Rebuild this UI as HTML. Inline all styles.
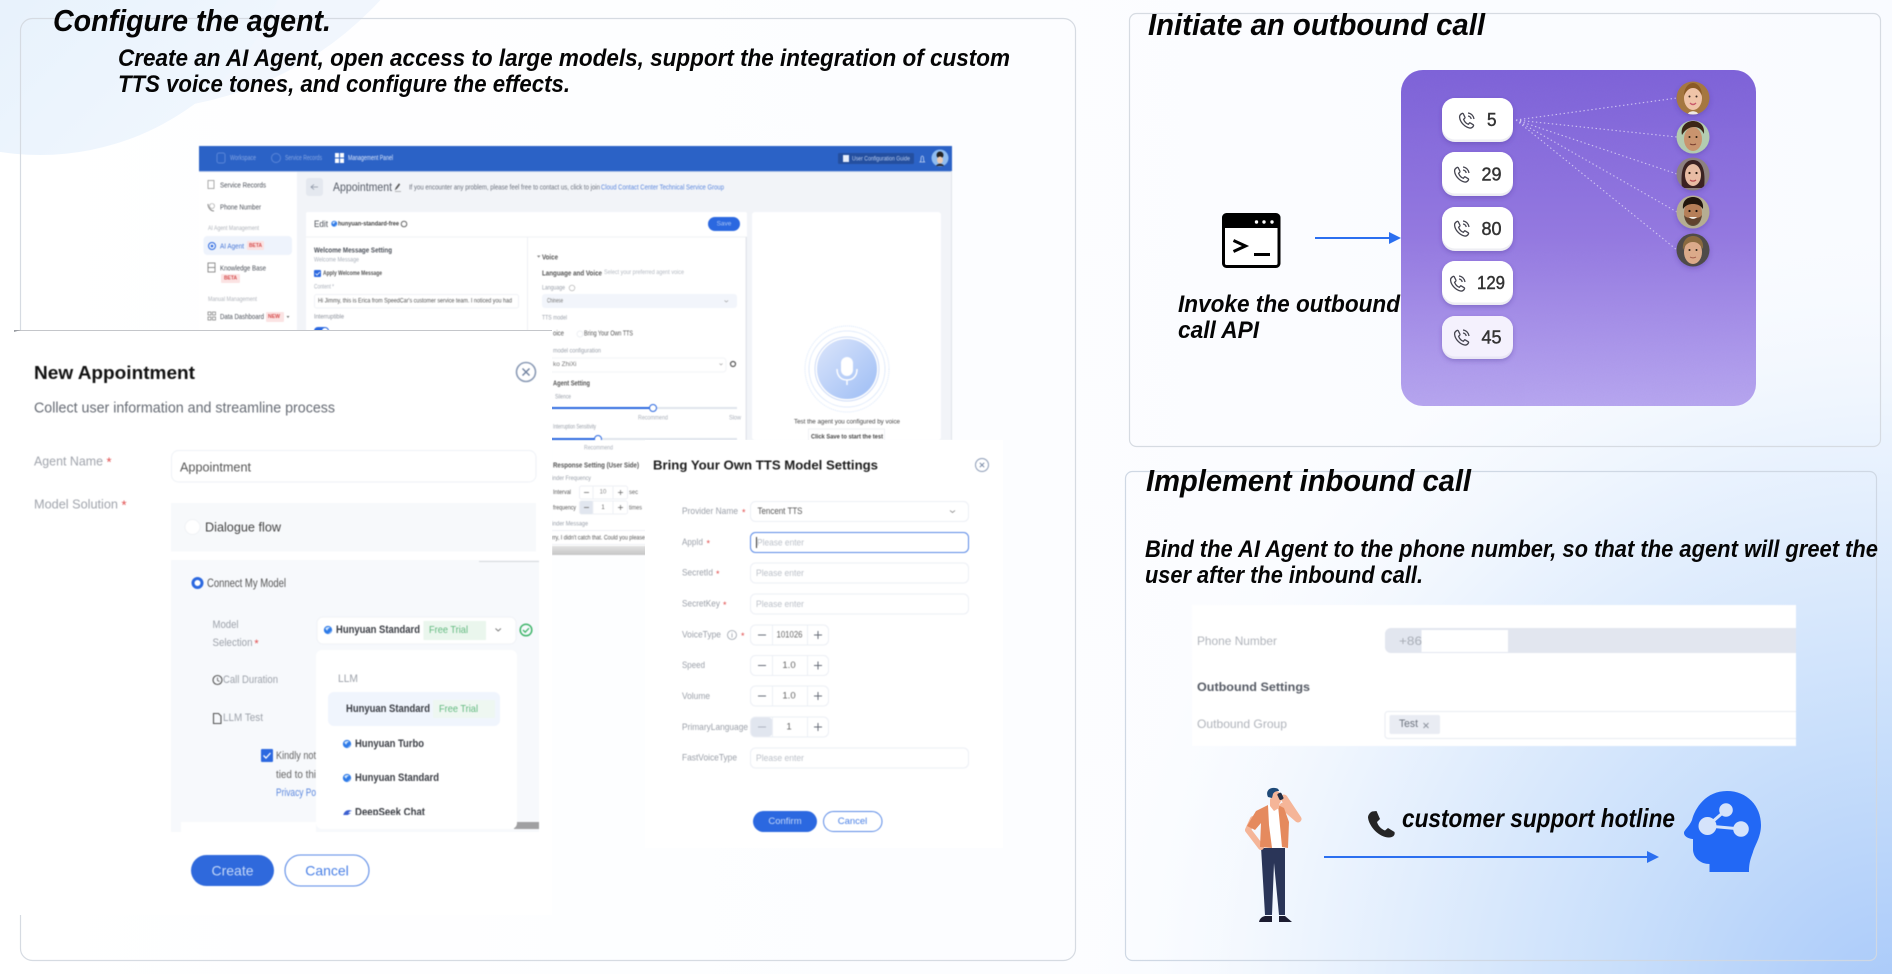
<!DOCTYPE html>
<html lang="en"><head><meta charset="utf-8"><title>AI Agent</title>
<style>
html,body{margin:0;padding:0;width:1892px;height:974px;overflow:hidden;background:#fff}
svg{display:block;position:absolute;left:0;top:0}
text{font-family:"Liberation Sans",sans-serif;white-space:pre}
.h{font-weight:700;font-style:italic;fill:#050505}
.u text,text.c{dominant-baseline:central}
.shot{filter:blur(.4px)}
.soft{filter:blur(.35px)}
</style></head><body>
<svg width="1892" height="974" viewBox="0 0 1892 974" xmlns="http://www.w3.org/2000/svg">
<defs>
<linearGradient id="base" x1="0" y1="0" x2="1" y2="0"><stop offset="0" stop-color="#fff"/><stop offset=".5" stop-color="#fcfdff"/><stop offset="1" stop-color="#f9fbff"/></linearGradient>
<radialGradient id="bg" gradientUnits="userSpaceOnUse" cx="1892" cy="1010" r="800"><stop offset="0" stop-color="#a8c9f9"/><stop offset=".35" stop-color="#c9dffb"/><stop offset=".75" stop-color="#eef5fe"/><stop offset="1" stop-color="#f9fbff" stop-opacity="0"/></radialGradient>
<linearGradient id="blob" x1="0" y1="0" x2="1" y2="1"><stop offset="0" stop-color="#d9eafa"/><stop offset="1" stop-color="#f3f8fe"/></linearGradient>
<linearGradient id="pur" x1="0" y1="0" x2="0" y2="1"><stop offset="0" stop-color="#7d62d8"/><stop offset=".5" stop-color="#9479e0"/><stop offset="1" stop-color="#b8a8f0"/></linearGradient>
<linearGradient id="mic" x1="0" y1="0" x2="1" y2="1"><stop offset="0" stop-color="#dbe5fb"/><stop offset="1" stop-color="#9dbdf5"/></linearGradient>
<linearGradient id="gb" x1="0" y1="0" x2="0" y2="1"><stop offset="0" stop-color="#e2e2e2"/><stop offset="1" stop-color="#c6c6c6"/></linearGradient>
<filter id="noise"><feTurbulence type="fractalNoise" baseFrequency=".9" numOctaves="2"/><feColorMatrix values="0 0 0 0 .3 0 0 0 0 .2 0 0 0 0 .7 0 0 0 .9 0"/></filter>
<filter id="sh" x="-30%" y="-30%" width="160%" height="170%"><feDropShadow dx="0" dy="2" stdDeviation="2.5" flood-color="#4a3596" flood-opacity=".35"/></filter>
<clipPath id="pan"><rect x="1401" y="70" width="355" height="336" rx="22"/></clipPath>
<clipPath id="av"><circle cx="0" cy="0" r="16.5"/></clipPath>
<clipPath id="dd"><rect x="316" y="650" width="201" height="165"/></clipPath>
<symbol id="ph" viewBox="0 0 18 18" overflow="visible"><path d="M4 2.500c-1.500.8-2.600 2-2.400 3.800.5 4.800 5 9.800 10 10.700 1.600.3 3-.6 3.800-2 .3-.5.1-1-.3-1.300l-2.600-1.600c-.4-.3-1-.2-1.300.2l-.9 1c-2-.8-4-3-4.700-5l1-.9c.4-.3.5-.8.3-1.300L5.300 2.800C5 2.300 4.400 2.200 4 2.500z" fill="none" stroke="#454550" stroke-width="1.300"/><path d="M10 2c3 .2 5.500 2.700 6 6M10 5c1.600.2 2.900 1.400 3.200 3" fill="none" stroke="#454550" stroke-width="1.300"/></symbol>
<symbol id="globe" viewBox="0 0 10 10" overflow="visible"><circle cx="5" cy="5" r="4.600" fill="#2f7be8"/><path d="M2 3.200c1.600-1.800 4-2 5.500-.8C6 2.600 4.600 4 4.400 5.600 3.500 5.500 2.600 4.600 2 3.200zM5 9c1.800-.6 3.200-2 3.600-3.600.4 1.800-1.600 3.900-3.600 3.600z" fill="#cfe3fb"/></symbol>
</defs>

<rect width="1892" height="974" fill="url(#base)"/>
<rect width="1892" height="974" fill="url(#bg)"/>
<circle cx="130" cy="-230" r="340" fill="#f1f6fd"/>
<circle cx="40" cy="-105" r="260" fill="url(#blob)"/>

<rect x="20.500" y="18.500" width="1055" height="942" rx="12" fill="none" stroke="#d6dbe2" stroke-width="1.200"/>
<rect x="1129.500" y="13.500" width="751" height="433" rx="7" fill="none" stroke="#d6dbe2" stroke-width="1.200"/>
<rect x="1125.500" y="471.500" width="751" height="489" rx="7" fill="none" stroke="#cfd8e4" stroke-width="1.200"/>

<text class="h" x="53" y="31" font-size="31" textLength="278" lengthAdjust="spacingAndGlyphs">Configure the agent.</text>
<text class="h" x="118" y="66" font-size="24" textLength="892" lengthAdjust="spacingAndGlyphs">Create an AI Agent, open access to large models, support the integration of custom</text>
<text class="h" x="118" y="92" font-size="24" textLength="452" lengthAdjust="spacingAndGlyphs">TTS voice tones, and configure the effects.</text>

<!-- management screenshot -->
<g class="shot u">
<rect x="199" y="146" width="753" height="294" fill="#f2f4f8"/>
<rect x="199" y="171" width="98" height="269" fill="#fff"/>
<rect x="199" y="146" width="753" height="25" fill="#2b62c6"/>
<rect x="217" y="153" width="8" height="10" rx="2" fill="none" stroke="#5a86d8"/>
<text x="230" y="158.500" font-size="7" fill="#86a6e2" textLength="26" lengthAdjust="spacingAndGlyphs">Workspace</text>
<circle cx="276" cy="158" r="4.500" fill="none" stroke="#5a86d8"/>
<text x="285" y="158.500" font-size="7" fill="#86a6e2" textLength="37" lengthAdjust="spacingAndGlyphs">Service Records</text>
<rect x="335" y="153" width="4" height="4.500" fill="#fff"/><rect x="340" y="153" width="4" height="4.500" fill="#fff"/><rect x="335" y="158.500" width="4" height="4.500" fill="#fff"/><rect x="340" y="158.500" width="4" height="4.500" fill="#fff"/>
<text x="348" y="158.500" font-size="7" fill="#dbe6f9" textLength="45" lengthAdjust="spacingAndGlyphs">Management Panel</text>
<rect x="838" y="153" width="76" height="11" rx="1.500" fill="#244f9f"/>
<rect x="843" y="155" width="6" height="7" fill="#e8eefa"/>
<text x="852" y="159" font-size="6.500" fill="#b9cdf0" textLength="58" lengthAdjust="spacingAndGlyphs">User Configuration Guide</text>
<path d="M920 162h4.500c-1-1-1-2-1-4 0-1-.6-2-1.200-2s-1.200 1-1.200 2c0 2 0 3-1.100 4z" fill="none" stroke="#c6d6f4" stroke-width=".8"/>
<circle cx="940" cy="158" r="8.500" fill="#8fbcf0"/><circle cx="940" cy="155" r="3.500" fill="#222"/><ellipse cx="940" cy="160" rx="3" ry="3.500" fill="#e9c9b2"/><path d="M936 166c1-3 7-3 8 0" fill="#2a2a30"/>

<g font-size="7.500" fill="#4a4f58">
<rect x="208" y="180.500" width="6" height="8" fill="none" stroke="#888" stroke-width=".7"/>
<text x="220" y="185" textLength="46" lengthAdjust="spacingAndGlyphs">Service Records</text>
<path d="M208 204c0 4 3 7 6 7" fill="none" stroke="#888" stroke-width="1"/><circle cx="212" cy="206" r="2.500" fill="none" stroke="#999" stroke-width=".6"/>
<text x="220" y="207" textLength="41" lengthAdjust="spacingAndGlyphs">Phone Number</text>
<text x="208" y="229" font-size="6" fill="#b0b4bb" textLength="51" lengthAdjust="spacingAndGlyphs">AI Agent Management</text>
<rect x="203.500" y="236" width="88.500" height="19" rx="4" fill="#eef3fc"/>
<circle cx="212" cy="246" r="3.500" fill="none" stroke="#2b68e0"/><circle cx="212" cy="246" r="1.300" fill="#2b68e0"/>
<text x="220" y="246" fill="#4877d6" textLength="24" lengthAdjust="spacingAndGlyphs">AI Agent</text>
<rect x="247" y="241" width="17" height="9" rx="1" fill="#fbe3e3"/><text x="249" y="246" font-size="5.500" fill="#d64b4b" font-weight="700" textLength="13" lengthAdjust="spacingAndGlyphs">BETA</text>
<rect x="208" y="263" width="7" height="9" fill="none" stroke="#777" stroke-width=".8"/><path d="M208 267.500h7" stroke="#777" stroke-width=".8"/>
<text x="220" y="268" textLength="46" lengthAdjust="spacingAndGlyphs">Knowledge Base</text>
<rect x="221" y="274" width="19" height="9" rx="1" fill="#fbe3e3"/><text x="224" y="278.500" font-size="5.500" fill="#d64b4b" font-weight="700" textLength="13" lengthAdjust="spacingAndGlyphs">BETA</text>
<text x="208" y="300" font-size="6" fill="#b0b4bb" textLength="49" lengthAdjust="spacingAndGlyphs">Manual Management</text>
<rect x="208" y="312" width="3" height="3" fill="none" stroke="#777" stroke-width=".7"/><rect x="212.500" y="312" width="3" height="3" fill="none" stroke="#777" stroke-width=".7"/><rect x="208" y="317" width="3" height="3" fill="none" stroke="#777" stroke-width=".7"/><rect x="212.500" y="317" width="3" height="3" fill="none" stroke="#777" stroke-width=".7"/>
<text x="220" y="316.500" textLength="44" lengthAdjust="spacingAndGlyphs">Data Dashboard</text>
<rect x="266" y="312" width="18" height="10" rx="1" fill="#fbe3e3"/><text x="268" y="317" font-size="5.500" fill="#d64b4b" font-weight="700" textLength="12" lengthAdjust="spacingAndGlyphs">NEW</text>
<path d="M286.500 316l1.500 2 1.500-2z" fill="#777"/>
</g>

<rect x="306" y="178" width="17" height="18" rx="3" fill="#e4e8ef"/>
<path d="M318 187h-7m3-2.500l-3 2.500 3 2.500" fill="none" stroke="#8a93a3" stroke-width=".8"/>
<text x="333" y="187" font-size="12" fill="#555b66" textLength="59" lengthAdjust="spacingAndGlyphs">Appointment</text>
<path d="M395 190l1-2.500 3-4 1 1-3 4zM395 191.500h6" fill="#555" stroke="#555" stroke-width=".4"/>
<text x="409" y="187" font-size="7.500" fill="#6a707c" textLength="191" lengthAdjust="spacingAndGlyphs">If you encounter any problem, please feel free to contact us, click to join</text>
<text x="601" y="187" font-size="7.500" fill="#5b87de" textLength="123" lengthAdjust="spacingAndGlyphs">Cloud Contact Center Technical Service Group</text>

<rect x="306" y="212" width="441" height="228" rx="2" fill="#fff"/>
<rect x="752" y="212" width="189" height="228" rx="3" fill="#fff"/>
<rect x="199" y="171" width="753" height=".8" fill="#9fb7e2"/>
<rect x="951" y="171" width="1" height="269" fill="#dfe3ea"/>
<rect x="306" y="236.500" width="441" height="1" fill="#f0f2f5"/>
<rect x="527" y="237" width="1" height="203" fill="#eef0f4"/>
<rect x="745.500" y="237" width="1.500" height="203" fill="#e4e7ec"/>
<text x="314" y="224" font-size="9" fill="#4a4f58" textLength="14" lengthAdjust="spacingAndGlyphs">Edit</text>
<use href="#globe" x="331" y="220.500" width="6.500" height="6.500"/>
<text x="338" y="224" font-size="6.500" font-weight="700" fill="#444" textLength="61" lengthAdjust="spacingAndGlyphs">hunyuan-standard-free</text>
<circle cx="404" cy="224" r="2.800" fill="none" stroke="#666" stroke-width="1"/>
<rect x="708" y="217" width="32" height="14" rx="7" fill="#2b68e0"/>
<text x="724" y="224" font-size="6.500" fill="#a8c4f4" text-anchor="middle">Save</text>

<text x="314" y="250" font-size="7.500" font-weight="700" fill="#4a4f58" textLength="78" lengthAdjust="spacingAndGlyphs">Welcome Message Setting</text>
<text x="314" y="260" font-size="6.500" fill="#aab0ba" textLength="45" lengthAdjust="spacingAndGlyphs">Welcome Message</text>
<rect x="314" y="270" width="7" height="7" rx="1" fill="#2b68e0"/><path d="M315.500 273.500l1.500 1.500 3-3" fill="none" stroke="#fff" stroke-width=".8"/>
<text x="323" y="273.500" font-size="6.500" font-weight="700" fill="#555" textLength="59" lengthAdjust="spacingAndGlyphs">Apply Welcome Message</text>
<text x="314" y="287" font-size="6.500" fill="#aab0ba" textLength="20" lengthAdjust="spacingAndGlyphs">Content *</text>
<rect x="314.500" y="294.500" width="204" height="13.500" rx="2" fill="#fff" stroke="#f0f2f6"/>
<text x="318" y="301" font-size="6.200" fill="#555" textLength="194" lengthAdjust="spacingAndGlyphs">Hi Jimmy, this is Erica from SpeedCar's customer service team. I noticed you had</text>
<text x="314" y="317" font-size="6.500" fill="#8b909a" textLength="30" lengthAdjust="spacingAndGlyphs">Interruptible</text>
<rect x="314" y="327" width="15" height="8" rx="4" fill="#2b68e0"/><circle cx="325" cy="331" r="3" fill="#fff"/>

<path d="M537 255.500l1.700 2.200 1.700-2.200z" fill="#888"/>
<text x="542" y="257" font-size="7.500" font-weight="700" fill="#555" textLength="16" lengthAdjust="spacingAndGlyphs">Voice</text>
<text x="542" y="273" font-size="7.500" font-weight="700" fill="#555" textLength="60" lengthAdjust="spacingAndGlyphs">Language and Voice</text>
<text x="604" y="273" font-size="6" fill="#b5bac2" textLength="80" lengthAdjust="spacingAndGlyphs">Select your preferred agent voice</text>
<text x="542" y="288" font-size="6.500" fill="#9aa0aa" textLength="23" lengthAdjust="spacingAndGlyphs">Language</text>
<circle cx="572" cy="288" r="2.800" fill="none" stroke="#aaa" stroke-width=".6"/>
<rect x="542" y="294" width="195" height="14" rx="3" fill="#f2f5fb"/>
<text x="547" y="301" font-size="6.500" fill="#777" textLength="16" lengthAdjust="spacingAndGlyphs">Chinese</text>
<path d="M724.500 300.500l1.800 1.500 1.800-1.500" fill="none" stroke="#999" stroke-width=".6"/>
<text x="542" y="318" font-size="6.500" fill="#9aa0aa" textLength="25" lengthAdjust="spacingAndGlyphs">TTS model</text>
<text x="553" y="334" font-size="7" fill="#555" textLength="11" lengthAdjust="spacingAndGlyphs">oice</text>
<circle cx="580" cy="334" r="3" fill="#fff" stroke="#eef0f4"/>
<text x="584" y="334" font-size="7" fill="#555" textLength="49" lengthAdjust="spacingAndGlyphs">Bring Your Own TTS</text>
<text x="553" y="351" font-size="6.500" fill="#9aa0aa" textLength="48" lengthAdjust="spacingAndGlyphs">model configuration</text>
<rect x="540" y="358" width="186" height="14" rx="3" fill="#fff" stroke="#f2f4f7"/>
<text x="553" y="364.500" font-size="6.500" fill="#777">ko ZhiXi</text>
<path d="M719.500 363.500l1.500 1.500 1.500-1.500" fill="none" stroke="#999" stroke-width=".6"/>
<circle cx="733" cy="364" r="2.500" fill="none" stroke="#555" stroke-width="1.200"/>
<text x="553" y="383" font-size="7.500" font-weight="700" fill="#555" textLength="37" lengthAdjust="spacingAndGlyphs">Agent Setting</text>
<text x="555" y="397" font-size="6.500" fill="#9aa0aa" textLength="16" lengthAdjust="spacingAndGlyphs">Silence</text>
<rect x="530" y="407" width="207" height="2" fill="#dfe4ec"/><rect x="530" y="407" width="123" height="2" fill="#2b68e0"/><circle cx="653" cy="408" r="3.500" fill="#fff" stroke="#2b68e0"/>
<text x="638" y="418" font-size="6.500" fill="#aab0ba" textLength="30" lengthAdjust="spacingAndGlyphs">Recommend</text>
<text x="729" y="418" font-size="6.500" fill="#aab0ba" textLength="12" lengthAdjust="spacingAndGlyphs">Slow</text>
<text x="553" y="427" font-size="6.500" fill="#9aa0aa" textLength="43" lengthAdjust="spacingAndGlyphs">Interruption Sensitivity</text>
<rect x="530" y="438" width="207" height="2" fill="#dfe4ec"/><rect x="530" y="438" width="68" height="2" fill="#2b68e0"/><circle cx="598" cy="439" r="3.500" fill="#fff" stroke="#2b68e0"/>

<ellipse cx="847" cy="369" rx="42" ry="43" fill="none" stroke="#cfe0f8" stroke-width=".8" stroke-dasharray="1 1"/>
<circle cx="847" cy="369" r="38" fill="none" stroke="#d9e6fa" stroke-width=".8"/>
<circle cx="847" cy="369" r="32" fill="#fff" stroke="#cfdcf7"/>
<circle cx="847" cy="369" r="30" fill="url(#mic)"/>
<rect x="841" y="357" width="12" height="19" rx="6" fill="#fff"/>
<path d="M837 369c0 7 4 11 10 11s10-4 10-11M847 380v5" fill="none" stroke="#fff" stroke-width="1.500"/>
<text x="794" y="422" font-size="6.800" fill="#444" textLength="106" lengthAdjust="spacingAndGlyphs">Test the agent you configured by voice</text>
<rect x="808.500" y="429" width="76" height="12" fill="#fff" stroke="#f0f2f5"/>
<text x="811" y="437" font-size="6.800" font-weight="700" fill="#444" textLength="72" lengthAdjust="spacingAndGlyphs">Click Save to start the test</text>

<!-- strip below -->
<rect x="552" y="440" width="94" height="115" fill="#fff"/>
<text x="584" y="448" font-size="6.500" fill="#aab0ba" textLength="29" lengthAdjust="spacingAndGlyphs">Recommend</text>
<text x="553" y="465" font-size="7.500" font-weight="700" fill="#555" textLength="86" lengthAdjust="spacingAndGlyphs">Response Setting (User Side)</text>
<text x="552" y="479" font-size="6" fill="#9aa0aa" textLength="39" lengthAdjust="spacingAndGlyphs">inder Frequency</text>
<text x="553" y="492.500" font-size="6.500" fill="#555" textLength="18" lengthAdjust="spacingAndGlyphs">Interval</text>
<text x="553" y="508" font-size="6.500" fill="#555" textLength="23" lengthAdjust="spacingAndGlyphs">frequency</text>
<rect x="579.500" y="486" width="48" height="13" rx="2" fill="#fff" stroke="#eef0f5"/><rect x="579.500" y="501" width="48" height="13" rx="2" fill="#fff" stroke="#eef0f5"/>
<rect x="580" y="501" width="13" height="13" rx="2" fill="#e1e6ef"/>
<path d="M593 486v13M613 486v13M593 501v13M613 501v13" stroke="#eef0f5"/>
<path d="M584 492.500h5M618 492.500h5M620.500 490v5M584 507.500h5M618 507.500h5M620.500 505v5" stroke="#666" stroke-width=".7"/>
<text x="603" y="492.500" font-size="6" fill="#888" text-anchor="middle">10</text><text x="603" y="508" font-size="6" fill="#666" text-anchor="middle">1</text>
<text x="629" y="492.500" font-size="6.500" fill="#666" textLength="9" lengthAdjust="spacingAndGlyphs">sec</text>
<text x="629" y="508" font-size="6.500" fill="#666" textLength="13" lengthAdjust="spacingAndGlyphs">times</text>
<text x="552" y="524.500" font-size="6" fill="#9aa0aa" textLength="36" lengthAdjust="spacingAndGlyphs">inder Message</text>
<path d="M552 530.500h94M552 544.500h94" stroke="#eef0f5"/>
<text x="552" y="538" font-size="6.200" fill="#555" textLength="93" lengthAdjust="spacingAndGlyphs">rry, I didn't catch that. Could you please</text>
<rect x="552" y="546" width="94" height="9" fill="url(#gb)"/>
</g>

<!-- Dialog 1 -->
<rect x="0" y="330" width="552" height="585" fill="#fff"/>
<rect x="14" y="330" width="538" height="1" fill="#c4c6ca"/>
<path d="M14 330h7l-7 2z" fill="#9a9da3"/>
<g class="shot u">
<text x="34" y="373" font-size="18" font-weight="700" fill="#111" textLength="161" lengthAdjust="spacingAndGlyphs">New Appointment</text>
<circle cx="526" cy="372" r="9.500" fill="none" stroke="#8a9ab5" stroke-width="1.600"/>
<path d="M522.500 368.500l7 7m0-7l-7 7" stroke="#6f819f" stroke-width="1.400"/>
<text x="34" y="408.500" font-size="14.500" fill="#666b74" textLength="301" lengthAdjust="spacingAndGlyphs">Collect user information and streamline process</text>
<text x="34" y="461" font-size="13" fill="#a0a4ac" textLength="69" lengthAdjust="spacingAndGlyphs">Agent Name</text><text x="109" y="462" font-size="13" fill="#e04848" text-anchor="middle">*</text>
<text x="34" y="504" font-size="13" fill="#a0a4ac" textLength="84" lengthAdjust="spacingAndGlyphs">Model Solution</text><text x="124" y="505" font-size="13" fill="#e04848" text-anchor="middle">*</text>
<rect x="171.500" y="450.500" width="364.500" height="31.500" rx="7" fill="#fff" stroke="#eef1f6"/>
<text x="180" y="467" font-size="13" fill="#555" textLength="71" lengthAdjust="spacingAndGlyphs">Appointment</text>
<rect x="171" y="503" width="365" height="48.500" fill="#f7f9fb"/>
<circle cx="192.500" cy="527" r="7.500" fill="#fff" stroke="#f0f2f5"/>
<text x="205" y="527" font-size="13" fill="#444" textLength="76" lengthAdjust="spacingAndGlyphs">Dialogue flow</text>
<rect x="171" y="560" width="368" height="272" fill="#f7f9fc"/>
<path d="M479 561.500h60" stroke="#c9ccd2" stroke-width=".8"/>
<circle cx="197.500" cy="583" r="4.500" fill="#fff" stroke="#2b68e0" stroke-width="3"/>
<text x="207" y="584" font-size="11.500" fill="#555" textLength="79" lengthAdjust="spacingAndGlyphs">Connect My Model</text>
<text x="212.500" y="625" font-size="11" fill="#9da2aa" textLength="26" lengthAdjust="spacingAndGlyphs">Model</text>
<text x="212.500" y="643" font-size="11" fill="#9da2aa" textLength="40" lengthAdjust="spacingAndGlyphs">Selection</text><text x="256.500" y="644" font-size="11" fill="#e04848" text-anchor="middle">*</text>
<circle cx="217.500" cy="680" r="4.500" fill="none" stroke="#555" stroke-width="1.100"/><path d="M217.500 677.500v3l2 1" fill="none" stroke="#555" stroke-width=".8"/>
<text x="223" y="680" font-size="11" fill="#9da2aa" textLength="55" lengthAdjust="spacingAndGlyphs">Call Duration</text>
<path d="M213.500 713.500h5l2.500 2.500v7.500h-7.500z" fill="none" stroke="#555" stroke-width="1.100"/>
<text x="223" y="718" font-size="11" fill="#9da2aa" textLength="40" lengthAdjust="spacingAndGlyphs">LLM Test</text>
<rect x="261" y="749" width="12" height="13" rx="1" fill="#2b68e0"/><path d="M263.500 755.500l2.500 2.500 4.500-5" fill="none" stroke="#fff" stroke-width="1.300"/>
<text x="276" y="756" font-size="11" fill="#666" textLength="40" lengthAdjust="spacingAndGlyphs">Kindly not</text>
<text x="276" y="775" font-size="11" fill="#666" textLength="40" lengthAdjust="spacingAndGlyphs">tied to thi</text>
<text x="276" y="793" font-size="11" fill="#5b87de" textLength="40" lengthAdjust="spacingAndGlyphs">Privacy Po</text>
<rect x="181" y="822" width="135" height="10" fill="#fff"/>
<rect x="514" y="822" width="25" height="7" fill="#a0a0a2"/>
<rect x="317" y="617" width="199" height="27" rx="6" fill="#fff" stroke="#f0f2f6"/>
<use href="#globe" x="323.500" y="625.500" width="9" height="9"/>
<text x="336" y="630" font-size="11" font-weight="700" fill="#3a3d44" textLength="84" lengthAdjust="spacingAndGlyphs">Hunyuan Standard</text>
<rect x="423.500" y="621" width="62.500" height="19" fill="#eaf6ed"/>
<text x="429" y="630" font-size="10.500" fill="#5fb87d" textLength="39" lengthAdjust="spacingAndGlyphs">Free Trial</text>
<path d="M495.500 628.500l2.700 2.500 2.700-2.500" fill="none" stroke="#777" stroke-width=".9"/>
<circle cx="526" cy="630" r="5.800" fill="none" stroke="#3fb56a" stroke-width="1.500"/><path d="M523 630l2.200 2.200 3.800-4" fill="none" stroke="#3fb56a" stroke-width="1.300"/>
<rect x="316" y="650" width="201" height="179" rx="6" fill="#fff"/>
<text x="338" y="679" font-size="11" fill="#9da2aa" textLength="20" lengthAdjust="spacingAndGlyphs">LLM</text>
<rect x="328" y="692" width="172" height="34" rx="6" fill="#f0f5fd"/>
<text x="346" y="709" font-size="11" font-weight="700" fill="#3a3d44" textLength="84" lengthAdjust="spacingAndGlyphs">Hunyuan Standard</text>
<rect x="433" y="700" width="62" height="18" fill="#eef7f1"/>
<text x="439" y="709" font-size="10.500" fill="#5fb87d" textLength="39" lengthAdjust="spacingAndGlyphs">Free Trial</text>
<use href="#globe" x="342.500" y="739.500" width="9" height="9"/>
<text x="355" y="744" font-size="11" font-weight="700" fill="#3a3d44" textLength="69" lengthAdjust="spacingAndGlyphs">Hunyuan Turbo</text>
<use href="#globe" x="342.500" y="773.500" width="9" height="9"/>
<text x="355" y="778" font-size="11" font-weight="700" fill="#3a3d44" textLength="84" lengthAdjust="spacingAndGlyphs">Hunyuan Standard</text>
<g clip-path="url(#dd)">
<path d="M343 816c1-6 6-7 9-5-3 0-4 2-4 5zm3 0c1-3 3-3 5-3" fill="#3b5fd0"/>
<text x="355" y="812.500" font-size="11" font-weight="700" fill="#3a3d44" textLength="70" lengthAdjust="spacingAndGlyphs">DeepSeek Chat</text>
</g>
<rect x="191" y="855" width="83" height="31" rx="15.500" fill="#2f69dc"/>
<text x="232.500" y="870.500" font-size="14" fill="#c5d8f8" text-anchor="middle">Create</text>
<rect x="285" y="855" width="84" height="31" rx="15.500" fill="#fff" stroke="#5a8ae6" stroke-width="1.100"/>
<text x="327" y="870.500" font-size="14" fill="#4a80e6" text-anchor="middle">Cancel</text>
</g>

<!-- Dialog 2 -->
<rect x="645" y="440" width="358" height="408" fill="#fff"/>
<g class="shot u">
<text x="653" y="465.500" font-size="12.500" font-weight="700" fill="#1c1c1c" textLength="225" lengthAdjust="spacingAndGlyphs">Bring Your Own TTS Model Settings</text>
<circle cx="982" cy="465" r="6.500" fill="none" stroke="#8a9ab5" stroke-width="1"/><path d="M979.800 462.800l4.400 4.400m0-4.400l-4.400 4.400" stroke="#6f819f" stroke-width=".9"/>
<g font-size="9.500" fill="#9a9fa8">
<text x="682" y="511.500" textLength="56" lengthAdjust="spacingAndGlyphs">Provider Name</text>
<text x="682" y="542.500" textLength="21" lengthAdjust="spacingAndGlyphs">AppId</text>
<text x="682" y="573" textLength="31" lengthAdjust="spacingAndGlyphs">SecretId</text>
<text x="682" y="604" textLength="38" lengthAdjust="spacingAndGlyphs">SecretKey</text>
<text x="682" y="635" textLength="39" lengthAdjust="spacingAndGlyphs">VoiceType</text>
<text x="682" y="665.500" textLength="23" lengthAdjust="spacingAndGlyphs">Speed</text>
<text x="682" y="696.500" textLength="28" lengthAdjust="spacingAndGlyphs">Volume</text>
<text x="682" y="727.500" textLength="66" lengthAdjust="spacingAndGlyphs">PrimaryLanguage</text>
<text x="682" y="758" textLength="55" lengthAdjust="spacingAndGlyphs">FastVoiceType</text>
</g>
<g font-size="9" fill="#e04848"><text x="742" y="512.500">*</text><text x="706.500" y="543.500">*</text><text x="716" y="574">*</text><text x="723" y="605">*</text><text x="741" y="636">*</text></g>
<circle cx="732" cy="635" r="4.500" fill="none" stroke="#9aa0aa" stroke-width=".8"/><path d="M732 633.500v4M732 632.300v.5" stroke="#9aa0aa" stroke-width=".8"/>
<g fill="#fff" stroke="#eceff5">
<rect x="750.500" y="501.500" width="218" height="20" rx="5"/>
<rect x="750.500" y="532.500" width="218" height="20" rx="5" stroke="#5a8ae6"/>
<rect x="750.500" y="563" width="218" height="20" rx="5"/>
<rect x="750.500" y="594" width="218" height="20" rx="5"/>
<rect x="750.500" y="748" width="218" height="20" rx="5"/>
<rect x="750.500" y="625" width="78" height="20" rx="5"/>
<rect x="750.500" y="655.500" width="78" height="20" rx="5"/>
<rect x="750.500" y="686" width="78" height="20" rx="5"/>
<rect x="750.500" y="717" width="78" height="20" rx="5"/>
</g>
<rect x="751" y="717.500" width="21.500" height="19" rx="4" fill="#e1e6ef"/>
<path d="M772.500 625v20M807.500 625v20M772.500 655.500v20M807.500 655.500v20M772.500 686v20M807.500 686v20M772.500 717v20M807.500 717v20" stroke="#eceff5"/>
<path d="M758 635h8M814 635h8M818 631v8M758 665.500h8M814 665.500h8M818 661.500v8M758 696h8M814 696h8M818 692v8M814 727h8M818 723v8" stroke="#666c78" stroke-width="1"/>
<path d="M758 727h8" stroke="#aeb4c0" stroke-width="1"/>
<text x="757.500" y="511.500" font-size="9.500" fill="#555" textLength="45" lengthAdjust="spacingAndGlyphs">Tencent TTS</text>
<path d="M950 510.500l2.500 2 2.500-2" fill="none" stroke="#777" stroke-width=".8"/>
<path d="M756.500 537v11" stroke="#333" stroke-width="1"/>
<g font-size="9" fill="#bcc1c9">
<text x="757" y="542.500" textLength="47" lengthAdjust="spacingAndGlyphs">Please enter</text>
<text x="756" y="573" textLength="48" lengthAdjust="spacingAndGlyphs">Please enter</text>
<text x="756" y="604" textLength="48" lengthAdjust="spacingAndGlyphs">Please enter</text>
<text x="756" y="758" textLength="48" lengthAdjust="spacingAndGlyphs">Please enter</text>
</g>
<g font-size="9.500" fill="#666" text-anchor="middle">
<text x="789.500" y="635" textLength="26" lengthAdjust="spacingAndGlyphs">101026</text>
<text x="789" y="665.500">1.0</text><text x="789" y="696">1.0</text><text x="789" y="727">1</text>
</g>
<rect x="753" y="811" width="64" height="21" rx="10.500" fill="#2b68e0"/>
<text x="785" y="821.500" font-size="9.500" fill="#c5d8f8" text-anchor="middle">Confirm</text>
<rect x="823.500" y="811.500" width="58.500" height="20" rx="10" fill="#fff" stroke="#5a8ae6"/>
<text x="852.500" y="821.500" font-size="9.500" fill="#4a80e6" text-anchor="middle">Cancel</text>
</g>

<!-- Outbound -->
<text class="h" x="1148" y="35" font-size="31" textLength="337" lengthAdjust="spacingAndGlyphs">Initiate an outbound call</text>
<rect x="1223.500" y="214.500" width="55.500" height="52" rx="3" fill="#fff" stroke="#000" stroke-width="3"/>
<path d="M1223 217a3 3 0 0 1 3-3h50a3 3 0 0 1 3 3v11h-56z" fill="#000"/>
<circle cx="1256.500" cy="222" r="1.700" fill="#fff"/><circle cx="1264" cy="222" r="1.700" fill="#fff"/><circle cx="1272" cy="222" r="1.700" fill="#fff"/>
<path d="M1233.500 240.500l12 5.500-12 5.500" fill="none" stroke="#000" stroke-width="3"/>
<rect x="1254" y="253" width="16" height="3" fill="#000"/>
<path d="M1315 238h76" stroke="#2b6ff0" stroke-width="2"/><path d="M1389 232l12 6-12 6z" fill="#2b6ff0"/>
<text class="h" x="1178" y="312" font-size="24" textLength="222" lengthAdjust="spacingAndGlyphs">Invoke the outbound</text>
<text class="h" x="1178" y="338" font-size="24" textLength="81" lengthAdjust="spacingAndGlyphs">call API</text>

<rect x="1401" y="70" width="355" height="336" rx="22" fill="url(#pur)"/>
<g clip-path="url(#pan)"><rect x="1401" y="70" width="355" height="336" filter="url(#noise)" opacity=".13"/></g>
<g stroke="#e7e2fa" stroke-width="1.100" stroke-dasharray="1.400 2.600" fill="none" opacity=".75">
<path d="M1516 120L1677 98M1516 120L1677 137M1516 120L1677 174M1516 120L1677 212M1516 120L1677 250"/>
</g>
<g filter="url(#sh)">
<rect x="1442" y="98" width="71" height="44" rx="13" fill="#eeeef3"/>
<rect x="1442" y="152" width="71" height="44" rx="13" fill="#eeeef3"/>
<rect x="1442" y="207" width="71" height="44" rx="13" fill="#eeeef3"/>
<rect x="1442" y="261" width="71" height="44" rx="13" fill="#eeeef3"/>
<rect x="1442" y="316" width="71" height="43" rx="13" fill="#e9e6f5"/>
</g>
<rect x="1442" y="98" width="71" height="41.500" rx="13" fill="#fff"/>
<rect x="1442" y="152" width="71" height="41.500" rx="13" fill="#fff"/>
<rect x="1442" y="207" width="71" height="41.500" rx="13" fill="#fff"/>
<rect x="1442" y="261" width="71" height="41.500" rx="13" fill="#fff"/>
<rect x="1442" y="316" width="71" height="40.500" rx="13" fill="#f4f1fd"/>
<use href="#ph" x="1458" y="111" width="18" height="18"/>
<use href="#ph" x="1453" y="165" width="18" height="18"/>
<use href="#ph" x="1453" y="219" width="18" height="18"/>
<use href="#ph" x="1449" y="274" width="18" height="18"/>
<use href="#ph" x="1453" y="328" width="18" height="18"/>
<g font-size="18" fill="#333" stroke="#333" stroke-width=".45" class="u">
<text x="1487" y="120" textLength="9.500" lengthAdjust="spacingAndGlyphs">5</text>
<text x="1481.500" y="174.500" textLength="20" lengthAdjust="spacingAndGlyphs">29</text>
<text x="1481.500" y="229" textLength="20" lengthAdjust="spacingAndGlyphs">80</text>
<text x="1477" y="283" textLength="28" lengthAdjust="spacingAndGlyphs">129</text>
<text x="1481.500" y="337.500" textLength="20" lengthAdjust="spacingAndGlyphs">45</text>
</g>
<!-- avatars -->
<g class="soft">
<g transform="translate(1693 98)" filter="url(#sh)"><g clip-path="url(#av)"><circle r="17" fill="#a5773f"/><ellipse cy="0" rx="9" ry="12" fill="#f0c4a8"/><path d="M-9 -2c0-9 5-13 9-13s9 4 9 13c-2-5-5-8-9-8s-7 3-9 8z" fill="#8b5a28"/><circle cx="-3.500" cy="-1.500" r="1" fill="#3a2a20"/><circle cx="3.500" cy="-1.500" r="1" fill="#3a2a20"/><path d="M-3 5c2 2 4 2 6 0" stroke="#c9586a" stroke-width="1.400" fill="none"/><path d="M-6 17c2-5 10-5 12 0z" fill="#efe9e2"/></g></g>
<g transform="translate(1693 137)" filter="url(#sh)"><g clip-path="url(#av)"><circle r="17" fill="#b3cbb0"/><ellipse cy="2" rx="9" ry="12" fill="#c9946e"/><path d="M-11 -2c-2-9 5-14 11-14s12 4 11 13c-2-4-5-7-10-7s-9 3-12 8z" fill="#3a2616"/><circle cx="-3.500" cy="0" r="1" fill="#2a1a10"/><circle cx="3.500" cy="0" r="1" fill="#2a1a10"/><path d="M-3 7c2 1 4 1 6 0" stroke="#7a4030" stroke-width="1" fill="none"/></g></g>
<g transform="translate(1693 174)" filter="url(#sh)"><g clip-path="url(#av)"><circle r="17" fill="#8d8080"/><path d="M-11 14c-2-18 2-28 11-28s13 10 11 28z" fill="#3a2320"/><ellipse cy="1" rx="8" ry="11" fill="#e8bca4"/><circle cx="-3.500" cy="-1" r="1.100" fill="#2a1a10"/><circle cx="3.500" cy="-1" r="1.100" fill="#2a1a10"/><path d="M-3 6c2 1.500 4 1.500 6 0" stroke="#b84c50" stroke-width="1.300" fill="none"/></g></g>
<g transform="translate(1693 212)" filter="url(#sh)"><g clip-path="url(#av)"><circle r="17" fill="#b5ad92"/><ellipse cy="1" rx="9" ry="12" fill="#b57e58"/><path d="M-10 -3c-1-9 5-12 10-12s11 3 10 12c-3-4-6-5-10-5s-7 1-10 5z" fill="#221810"/><path d="M-9 3c1 8 5 11 9 11s8-3 9-11c-2 3-5 3-9 3s-7 0-9-3z" fill="#3c2a1c" opacity=".7"/><circle cx="-3.500" cy="-1" r="1.100" fill="#1a100a"/><circle cx="3.500" cy="-1" r="1.100" fill="#1a100a"/><path d="M-4 5c2 2.500 6 2.500 8 0z" fill="#f6f0e8"/></g></g>
<g transform="translate(1693 250)" filter="url(#sh)"><g clip-path="url(#av)"><circle r="17" fill="#4f4c48"/><ellipse cy="2" rx="9" ry="12" fill="#dbaa8a"/><path d="M-10 0c-1-9 4-14 10-14s11 4 10 13c-3-4-5-7-10-7s-8 3-10 8z" fill="#8a6a40"/><circle cx="-3.500" cy="0" r="1" fill="#2a2018"/><circle cx="3.500" cy="0" r="1" fill="#2a2018"/><path d="M-3 7c2 1.200 4 1.200 6 0" stroke="#a05a48" stroke-width="1" fill="none"/></g></g>
</g>

<!-- Inbound -->
<text class="h" x="1146" y="491" font-size="31" textLength="325" lengthAdjust="spacingAndGlyphs">Implement inbound call</text>
<text class="h" x="1145" y="557" font-size="24" textLength="733" lengthAdjust="spacingAndGlyphs">Bind the AI Agent to the phone number, so that the agent will greet the</text>
<text class="h" x="1145" y="583" font-size="24" textLength="278" lengthAdjust="spacingAndGlyphs">user after the inbound call.</text>
<g class="shot u">
<rect x="1192" y="605" width="604" height="141" fill="#fff"/>
<text x="1197" y="641" font-size="12" fill="#b0b4bb" textLength="80" lengthAdjust="spacingAndGlyphs">Phone Number</text>
<path d="M1796 628h-405a6 6 0 0 0-6 6v13a6 6 0 0 0 6 6h405z" fill="#e2e6ef"/>
<text x="1399" y="641" font-size="12" fill="#a8adb6" textLength="23" lengthAdjust="spacingAndGlyphs">+86</text>
<rect x="1421.500" y="630" width="86.500" height="22" fill="#fff"/>
<text x="1197" y="687" font-size="12" font-weight="700" fill="#555a64" textLength="113" lengthAdjust="spacingAndGlyphs">Outbound Settings</text>
<text x="1197" y="724" font-size="12" fill="#b0b4bb" textLength="90" lengthAdjust="spacingAndGlyphs">Outbound Group</text>
<path d="M1796 711.500h-408a3 3 0 0 0-3 3v21a3 3 0 0 0 3 3h408" fill="#fff" stroke="#e9ecf2"/>
<rect x="1389.500" y="715" width="50.500" height="19" rx="2" fill="#e9ecf3"/>
<text x="1399" y="724" font-size="11" fill="#6a707c" textLength="19" lengthAdjust="spacingAndGlyphs">Test</text>
<path d="M1423.500 723l5 5m0-5l-5 5" stroke="#8a909c" stroke-width=".9"/>
</g>

<!-- person -->
<g class="soft">
<path d="M1261 847H1285L1285 915H1279L1274 863L1272 915H1265Z" fill="#2a3558"/>
<path d="M1259 922q1-5 6-6h7v6zM1279 916h6l7 6h-13z" fill="#1c1c30"/>
<path d="M1268 805h14l3 43h-22z" fill="#fff"/>
<path d="M1253 819L1248 830L1261 847" fill="none" stroke="#f5b598" stroke-width="6" stroke-linejoin="round" stroke-linecap="round"/>
<path d="M1283 806L1298 819L1284 798" fill="none" stroke="#f5b598" stroke-width="7" stroke-linejoin="round" stroke-linecap="round"/>
<path d="M1268 805L1256 811L1247 826L1255 830L1261 823L1260 847L1272 848L1269 825zM1278 805L1284 808L1289 822L1288 848L1282 847z" fill="#e58a5e"/>
<path d="M1270 799h10l-1 9-5 3-4-5z" fill="#f5b598"/>
<ellipse cx="1276" cy="798" rx="5.500" ry="7" fill="#f5b598"/>
<path d="M1268 797c-3-6 2-10 7-9 3 0 4 2 4 3-3 0-5 1-6 3l-1 4z" fill="#1f4a78"/>
<rect x="1278" y="793" width="4.500" height="7" rx="1.500" fill="#222e44" transform="rotate(-25 1280 796)"/>
</g>
<path d="M1324 857h325" stroke="#2b6ff0" stroke-width="2"/><path d="M1647 851l12 6-12 6z" fill="#2b6ff0"/>
<path d="M1372 811.500l4.500-.5 3.500 8-3 3c1 3.500 4 7 8 8.500l3-2.500 6.500 4c1 3.500-2 5.500-5.500 5.500-10 0-20-11-21-20 0-2.500 2-5 4-6z" fill="#252525"/>
<text class="h" x="1402" y="827" font-size="26" textLength="273" lengthAdjust="spacingAndGlyphs">customer support hotline</text>
<path d="M1709.500 872v-8c-9 0-16-6-16.500-14v-11c-3 0-9-2-9-6 0-3 5-6 8-13 3-12 14-29 35-29 20 0 34 15 34 34 0 12-6 20-8 27-2 6-4 10-4 20z" fill="#2268f5"/>
<path d="M1726 810L1707.500 826L1741 829" fill="none" stroke="#d5e3fb" stroke-width="3"/>
<circle cx="1726" cy="810" r="6.800" fill="#d5e3fb"/><circle cx="1707.500" cy="826" r="9" fill="#d5e3fb"/><circle cx="1741" cy="829" r="7.800" fill="#d5e3fb"/>
</svg>
</body></html>
